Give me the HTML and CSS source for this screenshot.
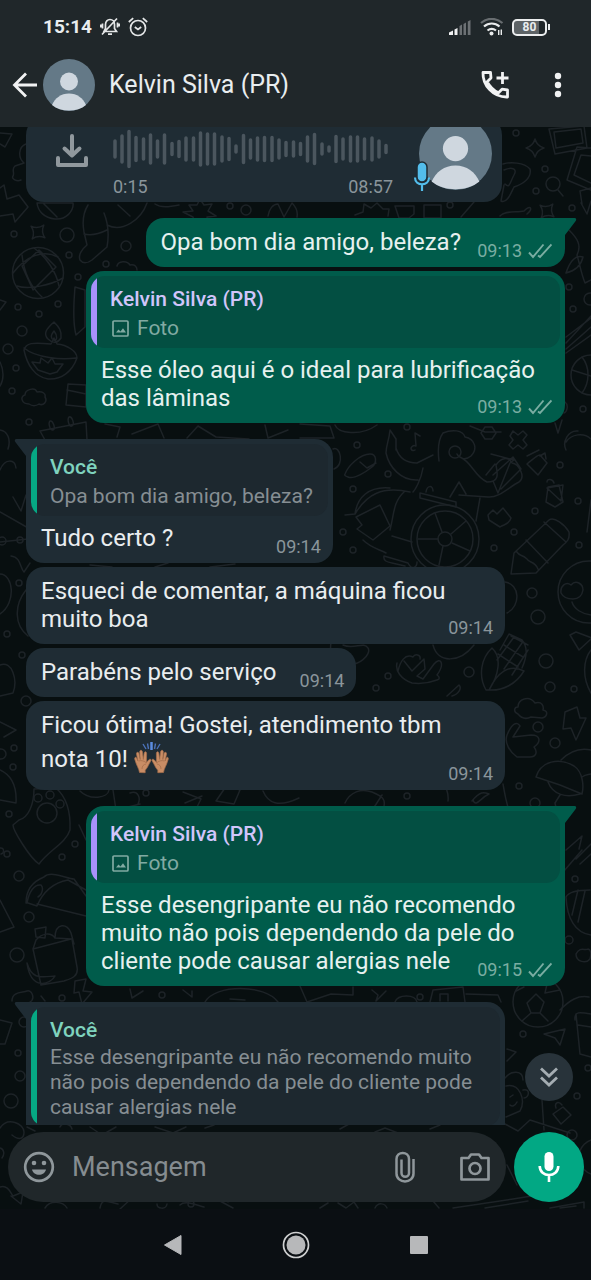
FILE: index.html
```html
<!DOCTYPE html>
<html lang="pt-BR">
<head>
<meta charset="utf-8">
<meta name="viewport" content="width=device-width, initial-scale=1">
<title>Kelvin Silva (PR)</title>
<link rel="stylesheet" href="styles.css">
</head>
<body>
<svg class="defs" aria-hidden="true">
  <symbol id="ticks" viewBox="0 0 24 16"><path d="M1 9.500l4 4.500L15.500 1.500M10 12.500l2 1.500L23.500 1.500" fill="none" stroke="currentColor" stroke-width="1.900"/></symbol>
  <symbol id="photo" viewBox="0 0 17 17"><rect x="1" y="1" width="15" height="15" rx="1" fill="none" stroke="currentColor" stroke-width="1.700"/><path d="M4 12.500l2.500-3 2 2 2.500-3.200 3 4.200z" fill="currentColor"/></symbol>
  <symbol id="person" viewBox="0 0 52 52"><circle cx="26" cy="26" r="26" fill="#647987"/><circle cx="26" cy="22.500" r="9" fill="#cfd7df"/><path d="M9 46c3-7 9-11.500 17-11.500S40 39 43 46c-4.500 3.800-10.500 5.500-17 5.500S13.500 49.800 9 46z" fill="#cfd7df"/></symbol>
  <symbol id="tail" viewBox="0 0 12 18"><path d="M0 0h9.500c2 0 2.200 2 1 3.200L0 17z" fill="currentColor"/></symbol>
  <symbol id="sparkle" viewBox="-12 -12 24 24"><path d="M0-9Q2-2 9 0Q2 2 0 9Q-2 2-9 0Q-2-2 0-9z"/></symbol>
</svg>

<header class="top">
  <div class="status">
    <span class="clock">15:14</span>
    <svg width="20" height="20" viewBox="0 0 20 20" fill="none" stroke="#e4e6e7" stroke-width="1.700"><path d="M4 14.500h12.500l-2-3V7.500C14.500 4.500 12.500 2.500 10 2.500S5.500 4.500 5.500 7.500v4zM8 17.200h4M2.500 6.500v5M.8 7.500v3M17.500 5.500v5M19.200 6.500v3M2 17.500L17 1.500"/></svg>
    <svg width="20" height="20" viewBox="0 0 20 20" fill="none" stroke="#e4e6e7" stroke-width="1.700"><circle cx="10" cy="11" r="7.500"/><path d="M6.800 10l3.200 2.500L13.200 10M.8 5L5.200 1.200M19.200 5L14.800 1.200"/></svg>
    <span class="spacer"></span>
    <svg width="24" height="18" viewBox="0 0 24 18"><path d="M1 17v-2.500l4-2V17zM6.500 17v-5.500l3-1.500v7z" fill="#f0f1f2"/><path d="M11.500 17V8l2.500-1.500V17zM15.500 17V6L18 4.500V17zM19.800 17V3.500L22.500 2v15z" fill="#6c7174"/></svg>
    <svg width="24" height="18" viewBox="0 0 24 18" fill="none" stroke="#e9ebec" stroke-width="2.200"><path d="M1 5C7-.5 16-.5 22.500 5" stroke="#686d70"/><path d="M4 8.500c4.500-4 11-4 15.500 0M7.500 12.500c2.500-2 6-2 8.500 0"/><circle cx="11.500" cy="15.500" r="2" fill="#e9ebec" stroke="none"/><path d="M18.700 17v-5M21.300 11.500v5.500" stroke-width="1.400"/></svg>
    <span class="battery"><span class="battery-body">80</span><span class="battery-tip"></span></span>
  </div>
  <div class="bar">
    <button class="icon-button back" aria-label="Voltar"><svg width="26" height="26" viewBox="0 0 26 26" fill="none" stroke="#f1f2f3" stroke-width="2.800"><path d="M25 13H3M14 1.500L2.500 13 14 24.500"/></svg></button>
    <svg class="avatar" aria-hidden="true"><use href="#person"/></svg>
    <h1 class="name">Kelvin Silva (PR)</h1>
    <button class="icon-button call" aria-label="Ligar"><svg width="28" height="28" viewBox="0 0 28 28" fill="none" stroke="#f1f2f3" stroke-width="2.800"><path d="M2 1.500h7.500l.5 5.500-3.800 3.800C9 16 12 19 17.500 21.800l3.500-3.600 5.500.8v7C12 26.500 1.500 14 2 1.500z" stroke-linejoin="round"/><path d="M21.500 1v12M15.500 7h12"/></svg></button>
    <button class="icon-button" aria-label="Mais opções"><svg width="8" height="26" viewBox="0 0 8 26" fill="#f1f2f3"><circle cx="4" cy="4" r="3.200"/><circle cx="4" cy="13" r="3.200"/><circle cx="4" cy="22" r="3.200"/></svg></button>
  </div>
</header>

<main class="conversation">
  <svg class="wallpaper" viewBox="0 127 591 1082" preserveAspectRatio="xMinYMin slice" aria-hidden="true">
    <g fill="none" stroke="#1d2327" stroke-width="1.500" stroke-linejoin="round" stroke-linecap="round">
      <path d="M0 133l12 1-7 13-5-3M26 144c-8 3-8 14-2 19l-9 3c-4 3 0 7-2 10s4 6 8 4M0 188l4-3 3 14 12-4 9 12-13 15-2-8-13 2M37 203h36c1 8-7 17-18 16s-17-8-18-16zM43 203l14 14"/>
      <path d="M88 205c-5 8-6 16-4 27l3 13c-5 4-9 10-7 15 3 4 8 3 12 0l15-13c2-11 1-24-3-34M84 234c8 2 15 0 23-4M107 225c15 8 34-5 40-22M118 205l12 11M155 204c6 4 14 3 24 1"/>
      <use href="#sparkle" x="-12" y="-12" width="24" height="24" transform="translate(38 232) rotate(40)"/>
      <circle cx="38" cy="273" r="25.500"/><path d="M13 273c13-17 30-24 45-16M17 286c12 4 34-1 46-8M34 248c12 9 22 23 25 38M22 255c2 18 10 33 20 42M22 266l11 24 23-23-17-17z"/>
      <path d="M75 287l10 3v37l-9 8c-4-15-2-34-1-48zM54 322c-8 7-11 12-6 17s10 4 13-1c1-7-2-11-7-16zM54 331c-4 5-3 8 0 9s4-4 0-9zM24 350c2-7 8-8 27-6l3-6 3 6c10 1 20 7 20 14-5 14-16 22-29 21-13-2-21-14-24-29zM24 348c12 10 38 12 52 10M38 370l-6-8 8 1 1-5 7 5 4-5 3 6 8 0-6 8-7 2z"/>
      <path d="M29 404c-8 0-9-8-4-9 0-6 10-8 12-3 6-1 9 2 8 5 3 5-2 9-6 7-3 2-7 2-10 0zM68 384l18 1v22l-20-2zM67 390l19 4M40 431l46-9 1 18H45zM50 421c3-1 6 8 3 9s-5-7-3-9zM69 417c3-1 6 7 3 9s-5-7-3-9zM105 424l15 3-3 10M132 434l26-10 6 14M187 438l11-12 18 11 33 2M265 425l3 13 20-8M300 424l30 2 4 12H300M335 425c3 8 25 12 42 0"/>
      <path d="M183 212l10-1-4-6h8l3-6 4 6 8-1-4 7 8 5-9 1 2 6-10-3-4 3-2-6zM268 216c1-7 5-12 10-12l6 13 8-14c4 4 6 9 5 14M117 266c1-5 10-6 13-1 5-1 7 2 7 5M355 215l8-3 1-8 7 4 6-5 6 6 6 0-1 7M395 206h19v8l-5 4h-10zM424 205h17v13h-17zM461 217l13-15M500 216c5-6 17-3 24-5 7-7 9-2 3 3"/>
      <use href="#sparkle" x="-12" y="-12" width="24" height="24" transform="translate(547 211) rotate(40)"/>
      <use href="#sparkle" x="-12" y="-12" width="24" height="24" transform="translate(535 148)"/>
      <path d="M549 129l35-3 3 22-32 6zM554 132l27-3 2 14-27 5zM591 148l-14-1-10 33 24 10M591 156l-10-1-7 20 17 8M580 191l11-3M580 191l2 13M503 164c7-2 21-2 27 5 2 9-7 15-16 18-3 6-7 17-13 14l3-16M504 170c7-3 14-2 10 5s-4 14-9 9M569 230c8 8 13 15 8 25 3 10 4 18 8 28l6-3M566 273c4-12 10-18 17-16-2 9-9 14-17 16zM581 203l6 11 4-13"/>
      <circle cx="553" cy="184" r="7"/><path d="M558 190l5 6M566 343l25-27M566 337l25-19M566 349l25-22M566 353l25-18"/>
      <circle cx="591" cy="375" r="20"/><path d="M572 370l19 6M582 357c8 10 8 25 0 36M565 402c4 3 2 10-1 11M555 423l3 10 4-13M470 426l15 6h16M415 450c-3 2-6-2-2-4 1-1 2 0 3 0l-1-13 5 3M481 433l4-6h7l4 6-4 6h-7z"/>
      <path d="M510 436l3-5 5 4 5-4 4 4-4 5 4 5-4 4-5-4-5 4-4-4 4-5z"/>
      <path d="M386 453c0-8 3-12 4-23l6 9v11M386 453c3 14 15 28 32 27M396 448c3 10 9 15 21 15l16-8M423 468c-2 12-8 22-10 24M439 461c-1-8-2-20 4-28 9-4 20-3 22 4 10 2 13 12 6 19-6 5-12 2-14-2M460 457c12 5 14 19 27 25 12 0 11-7 9-17 4-6 12-10 16-2 7 1 14 14 7 19-10 5-20 16-31 15l-29-2M450 497l9-15 7 12M495 464l-9 11M491 454l23 6-4 3-12 30-5-12M493 475l20-18 8 12-20 20"/>
      <circle cx="455" cy="452" r="6"/><path d="M345 474c3-8 15-20 25-20 7 0 7 9 2 13s-18 13-24 10c-3-1-4-2-3-3zM360 462l7 6 9-5M333 449c7-4 12 16 1 20"/>
      <circle cx="445" cy="539" r="34"/><circle cx="445" cy="539" r="28"/><circle cx="445" cy="539" r="7"/><path d="M418 539h20M435 513l7 19M466 521l-15 13M470 551l-18-8M439 565l4-19M420 493l36 9v5l-36-9zM426 492c1-7 7-7 7-1M345 515l10-1c2-16 13-28 35-26M355 514c12-20 27-28 55-22M362 525l-6-8 24-12 10 21-17 14-16-11zM390 530c4-15 3-28 14-38M392 536l20 6M363 540c8 8 16 9 23 13M384 556l24 7c4 8 9 4 9-1M384 556c-1 5 3 6 8 7l13 3M480 498l-4 23"/>
      <path d="M511 574l3-21 35-33c5-4 16 5 20 12 1 7-2 10-6 13l-27 28zM516 551c5 7 5 2 11 8 2 4 8 2 11 10M544 522l22 20M526 540l22 23M527 456l12-6M527 464c5-4 11-10 13-9l7 8-9 12zM540 456l5-3 1 6M547 488l16-3-2 16zM548 487l11-2 4 17-8 5-9-5zM547 482c0-4 6-3 7 1M488 515l5-5 4 4 6-6 8 10c-2 7-7 6-11 9l-11-7zM591 500l-4 32M566 442c5-8 18-10 25-3M566 450c-4-8 2-20 12-19"/>
      <circle cx="589" cy="592" r="31"/><path d="M561 593c-1-7 5-12 10-8 5-6 12-1 12 5-1 6-5 9-10 9-6 0-10-2-12-6zM572 602c2 7 10 12 19 13M505 582c15 2 16 24 2 31M570 635l6-3 16 6-13 12zM591 650c-8 10-9 28 0 43"/>
      <path d="M486 690c-8-14-5-32 6-42 10 9 7 27-3 42zM489 690c8-17 20-27 35-19-8 13-21 20-35 19zM500 650l9-16 13 6c6 7 5 17 0 28M498 654l20 13M504 645l19 12M511 636l17 9M514 637l-17 23M522 643l-18 26M528 650l-16 25M398 671c2-9 7-18 15-14 2-4 8-2 7 2M404 661l8 10 12-12 1 10-8 7 6 3 11-15c7-8 11 0 3 11 3 2 3 4 0 5-8 3-18 4-25 3-11-4-17-12-15-20M343 645c11 5 21-4 25 3 4 6-10 20-22 15-12-3-17-10-15-20M433 645c5 19 27 18 41 0M447 696l12-11c3 3 0 9-7 11"/>
      <path d="M518 714c-5-2-4-7 0-7 0-8 11-12 17-4 7-2 9 3 8 7 6 1 4 7-1 8l-11-1c-4 2-9 2-13-3zM565 712l12-5 3 11h6l-10 22-5-12-8 1zM507 735c5-12 10-14 13-9l-7 11 18-2c10 0 10 7 3 12 4 5 2 10-4 10l-13 0c-7-5-13-14-10-22M536 777c5-16 23-20 38-11 9 6 10 20 8 28l-22-9-24-8zM548 782c5 13 18 16 32 12M561 760c10-10 21-12 30-10M582 777c4-3 6-2 9-3M448 801c1-8-2-12-2-14M560 795l-5 8 3 14M566 850l16-14-3 13M582 850l-18 21M576 859l15-15M580 864l11-10M590 890c-17 0-22 3-24 7 1 21 9 36 25 38M578 890l-6 25M585 891l-7 31M576 954c4-8 9-3 12-5 4 1 3 6 2 10-4 5-14 3-14-5M503 784c2 13 5 24 7 31M345 803c5-11 16-15 27-11 10 4 15 7 11 18M472 801c8-10 12-9 17-7-9 4-13 14-16 6M382 795l-9 14"/>
      <path d="M19 820c9-2 15-15 15-31l22-1c8 7 15 18 14 42-4 13-22 21-31 34-10-7-26-34-26-39zM79 825l7 15"/>
      <circle cx="47" cy="813" r="10"/><circle cx="38" cy="798" r="4"/><circle cx="50" cy="795" r="4"/><circle cx="60" cy="804" r="4"/>
      <path d="M0 770c11 5 17 16 16 33L0 800M0 722l16 8-12 7M0 665c12-5 18 15 13 28l-13 3M80 791c10 10 28 7 29-1M113 790l3 20 24-6M130 793c8-3 11 5 8 11M183 792l18 7-4 8M185 803l17-7M216 801l18 3 6-14-13-5zM263 791c5 12 15 17 36 7"/>
      <path d="M0 542l28-3M0 512l30 17M11 556c10 1 9 12 13 16l6-9M0 470c5-12 15-11 16-2M26 495l-5 16-8-14M0 574c13 0 17 28 0 40M26 590c-12 15-12 35 2 46M90 565l22 2M155 567l13-4M210 567l25-3"/>
      <path d="M26 903c0-10 3-20 18-26 7-7 23 2 30 2l12 17M28 903l9 3c5-12 15-23 31-26l18 10M37 904l49 12M27 903c2-11 7-19 14-18 3 3 1 10-3 12M35 929l11-2-1 11-9-1zM33 949l3-9c6-7 15-8 19-2l17 1 5 28c2 10-7 12-13 14l-23 4-8-36 38-10M55 938c0-16 13-15 16-5l3 11M27 963c5 17 14 14 28 13-4 8-24 16-28-13zM0 900l14 27-14 5M75 981l11-2-3 12 9 1-10 12-3-12-5 1zM12 1001c0-10 11-8 15-10s9 7 3 11l-4 12M41 996l4 5M130 989l2 9 11-7M183 990l9 7v-6M205 1002c10-18 60-18 73 0M230 999l15 1M0 1020l12 3-7 21H0M300 986l7 16 24-8 22 1v-8M372 990l6 5-2 6 10-10M395 1002c3-8 20-8 22 0M430 1002l3-12 30-3 2 15M440 1001v-7h8v7M466 994l32 1 3 7"/>
      <circle cx="538" cy="1002" r="25"/><path d="M527 1003l9-9 8 8-4 11h-9zM516 991l8-4M560 990l-15 3 2-9M522 1021l9-8M548 1021l-8-8M560 1010c10-10 18-15 29-13M575 1020c-1-9 5-8 16-6M576 1014l4 40 11 3M578 1025l13 2M544 1034l21-5-5 16-5-7zM507 1049l9 3-9 9M505 1078c6-8 18-8 18 2M506 1086c14-3 20 14 14 25l-14 6M510 1097l3-2M510 1105c2 2 5 1 7-3M523 1090c8-2 6 8 1 8M542 1100l2 30M505 1124l13 7 12-11 40 13M507 1165l10 20M553 1114l10-7 8 8-10 9zM556 1108c-2-6 3-7 6-3"/>
      <circle cx="597" cy="1157" r="18"/><path d="M0 1128c8-12 24-4 24 4s-6 8-12 3M0 1148c4 1 5 6 2 10M0 1187c8-3 11 7 13 9l10-4-2 12-10-8M27 1127l8 4M60 1127c2-5 11-3 12 2M90 1127l12 8 14-8M155 1127l18 6 13-6M205 1128l9-3M45 1208c5-8 18-7 22 0M100 1208c2-11 7-6 18-4M120 1209l12-11M157 1204c0 5 9 6 10 0M180 1205c5-5 16 0 24 2M228 1202l-2-5-6 4 13 7M340 1129l9-5M375 1132l10-4 13 5M430 1129l10-4M453 1208l60-9 25-4M485 1208l43-7M550 1208l34-6v6M560 1208l16-2M320 1208l8-5M338 1203l8 5 8-6 4 6M375 1208c3-6 10-5 12 0M433 1201l6 7"/>
      <path d="M455 822l8-4M0 848c4-1 5 5 1 6M0 300l6 2-6 8M0 362c4 8 4 18 0 24M0 430c8 1 11 10 8 19"/>
      <circle cx="14" cy="234" r="3"/><circle cx="67" cy="235" r="7"/><circle cx="126" cy="246" r="5"/><circle cx="69" cy="255" r="3"/><circle cx="106" cy="264" r="3"/><circle cx="78" cy="277" r="3"/><circle cx="18" cy="307" r="3"/><circle cx="58" cy="304" r="3"/><circle cx="39" cy="314" r="3"/><circle cx="22" cy="331" r="5"/><circle cx="8" cy="349" r="5"/><circle cx="16" cy="368" r="3"/><circle cx="12" cy="391" r="3"/><circle cx="29" cy="422" r="3"/><circle cx="230" cy="206" r="3"/><circle cx="246" cy="210" r="5"/><circle cx="450" cy="205" r="3"/><circle cx="572" cy="208" r="3"/><circle cx="569" cy="287" r="3"/><circle cx="590" cy="299" r="6"/><circle cx="573" cy="309" r="3"/><circle cx="583" cy="409" r="3"/><circle cx="407" cy="427" r="3"/><circle cx="357" cy="445" r="3"/><circle cx="516" cy="133" r="3"/><circle cx="545" cy="169" r="3"/><circle cx="536" cy="191" r="3"/>
      <circle cx="388" cy="474" r="3"/><circle cx="353" cy="489" r="3"/><circle cx="343" cy="532" r="3"/><circle cx="353" cy="550" r="3"/><circle cx="560" cy="465" r="3"/><circle cx="578" cy="501" r="3"/><circle cx="535" cy="511" r="3"/><circle cx="514" cy="532" r="3"/><circle cx="494" cy="548" r="3"/><circle cx="579" cy="545" r="3"/><circle cx="532" cy="593" r="5"/><circle cx="538" cy="617" r="7"/><circle cx="546" cy="661" r="7"/><circle cx="550" cy="687" r="5"/><circle cx="574" cy="689" r="3"/><circle cx="469" cy="672" r="5"/><circle cx="388" cy="676" r="3"/><circle cx="376" cy="688" r="3"/><circle cx="538" cy="727" r="5"/><circle cx="555" cy="743" r="5"/><circle cx="519" cy="786" r="3"/><circle cx="535" cy="803" r="5"/><circle cx="407" cy="796" r="3"/><circle cx="575" cy="879" r="3"/><circle cx="569" cy="940" r="4"/><circle cx="420" cy="997" r="3"/>
      <circle cx="20" cy="540" r="3"/><circle cx="2" cy="541" r="4"/><circle cx="19" cy="583" r="3"/><circle cx="7" cy="634" r="3"/><circle cx="22" cy="655" r="3"/><circle cx="26" cy="701" r="5"/><circle cx="14" cy="748" r="3"/><circle cx="1" cy="754" r="5"/><circle cx="13" cy="767" r="3"/><circle cx="9" cy="814" r="3"/><circle cx="75" cy="844" r="3"/><circle cx="7" cy="854" r="3"/><circle cx="62" cy="857" r="3"/><circle cx="19" cy="876" r="5"/><circle cx="29" cy="917" r="5"/><circle cx="17" cy="955" r="7"/><circle cx="62" cy="998" r="3"/><circle cx="162" cy="995" r="3"/><circle cx="24" cy="1022" r="5"/><circle cx="18" cy="1053" r="3"/><circle cx="20" cy="1076" r="5"/><circle cx="11" cy="1101" r="7"/><circle cx="523" cy="1034" r="3"/><circle cx="588" cy="1068" r="3"/><circle cx="577" cy="1096" r="3"/><circle cx="572" cy="1135" r="5"/><circle cx="146" cy="793" r="3"/><circle cx="191" cy="1204" r="3"/>
    </g>
  </svg>

  <div class="chat">
    <article class="bubble in audio">
      <button class="icon-button download" aria-label="Baixar"><svg width="34" height="34" viewBox="0 0 34 34" fill="none" stroke="#90989d" stroke-width="4" stroke-linecap="round" stroke-linejoin="round"><path d="M17 3v19M9.500 15.500L17 22.500l7.500-7M3 25v7h28v-7"/></svg></button>
      <div class="track">
        <svg width="281" height="40" viewBox="0 0 281 40" stroke="#4b565e" stroke-width="3.500" stroke-linecap="round" aria-hidden="true"><path d="M3 12v16M10 7v26M17 2.500v35M24 8.500v23M31.500 10v20M38.500 6v28M45.500 12v16M52.500 6v28M60 14.500v11M67 12.500v15M74 9v22M81.500 9v22M88.500 4v32M95.500 5v30M102.500 5v30M110 8v24M117 9.500v21M124 17v6M131.500 6.500v27M138.500 11v18M145.500 9v22M152.500 8.500v23M160 8.500v23M167 11v18M174 13.500v13M181.500 13v14M188.500 14.500v11M195.500 8v24M202.500 5.500v29M210 15v10M217 18v4M224 7.500v25M231 10v20M238.500 8v24M245.500 8v24M252.500 10v20M260 9v22M267 12v16M274 16.500v7"/></svg>
        <div class="track-times"><span>0:15</span><time>08:57</time></div>
      </div>
      <div class="sender">
        <svg class="sender-photo" aria-hidden="true"><use href="#person"/></svg>
        <svg class="sender-mic" viewBox="0 0 18 32" aria-hidden="true"><rect x="4" y="1" width="10" height="20" rx="5" fill="#53bdeb" stroke="#1f2c34" stroke-width="1.500"/><path d="M2 16.500c0 9 14 9 14 0M9 23.500V30" fill="none" stroke="#53bdeb" stroke-width="2.200"/></svg>
      </div>
    </article>

    <article class="bubble out first">
      <svg class="tail"><use href="#tail"/></svg>
      <div class="body"><p>Opa bom dia amigo, beleza?</p><span class="meta"><time>09:13</time><svg class="ticks"><use href="#ticks"/></svg></span></div>
    </article>

    <article class="bubble out">
      <blockquote class="quote"><strong>Kelvin Silva (PR)</strong><span class="media"><svg class="photo"><use href="#photo"/></svg>Foto</span></blockquote>
      <div class="body"><p>Esse óleo aqui é o ideal para lubrificação das lâminas</p><span class="meta"><time>09:13</time><svg class="ticks"><use href="#ticks"/></svg></span></div>
    </article>

    <article class="bubble in first">
      <svg class="tail"><use href="#tail"/></svg>
      <blockquote class="quote"><strong>Você</strong><span>Opa bom dia amigo, beleza?</span></blockquote>
      <div class="body"><p>Tudo certo ?</p><span class="meta"><time>09:14</time></span></div>
    </article>

    <article class="bubble in">
      <div class="body"><p>Esqueci de comentar, a máquina ficou muito boa</p><span class="meta"><time>09:14</time></span></div>
    </article>

    <article class="bubble in">
      <div class="body"><p>Parabéns pelo serviço</p><span class="meta"><time>09:14</time></span></div>
    </article>

    <article class="bubble in">
      <div class="body"><p>Ficou ótima! Gostei, atendimento tbm nota 10! <svg class="emoji" viewBox="0 0 35 33" role="img" aria-label="Mãos levantadas"><path d="M17.500 1v8" stroke="#5c8de0" stroke-width="2.500"/><path d="M13.500 2.500l1 5.500M21.500 2.500l-1 5.500M9 3l3 5M26 3l-3 5" stroke="#4b72b8" stroke-width="1.400"/><g id="hand"><path d="M5.500 31.500c-.5-4-3.500-8-4.800-13.500-.3-2 1.600-2.300 2.200-.5l1 2.500-1.400-7c-.3-2 2-2.300 2.500-.4l1.200 5.900-.5-7.700c0-2 2.400-2 2.700 0l.9 7.600.9-6.500c.4-1.800 2.500-1.400 2.400.5l-.1 9.100c1.500-1.800 3-4 4.300-3 1 1-1.500 3.500-2.500 6-1 2.300-2.200 3.700-3.100 4.700v2.500z" fill="#c98d65" stroke="#a66f4b" stroke-width=".7"/><path d="M4.500 20c3-1 6 0 8 2M8 28c0-3 1.500-4.500 4-5" fill="none" stroke="#a66f4b" stroke-width=".8"/></g><use href="#hand" transform="translate(35 0) scale(-1 1)"/></svg></p><span class="meta"><time>09:14</time></span></div>
    </article>

    <article class="bubble out first">
      <svg class="tail"><use href="#tail"/></svg>
      <blockquote class="quote"><strong>Kelvin Silva (PR)</strong><span class="media"><svg class="photo"><use href="#photo"/></svg>Foto</span></blockquote>
      <div class="body"><p>Esse desengripante eu não recomendo muito não pois dependendo da pele do cliente pode causar alergias nele</p><span class="meta"><time>09:15</time><svg class="ticks"><use href="#ticks"/></svg></span></div>
    </article>

    <article class="bubble in first partial">
      <svg class="tail"><use href="#tail"/></svg>
      <blockquote class="quote"><strong>Você</strong><span>Esse desengripante eu não recomendo muito não pois dependendo da pele do cliente pode causar alergias nele</span></blockquote>
    </article>

    <button class="jump" aria-label="Ir para o fim"><svg width="20" height="22" viewBox="0 0 20 22" fill="none" stroke="#a5adb2" stroke-width="2.800"><path d="M2 2.500l8 7.500 8-7.500M2 11.500l8 7.500 8-7.500"/></svg></button>
  </div>

  <form class="composer">
    <div class="field">
      <button type="button" class="icon-button" aria-label="Emoji"><svg width="32" height="32" viewBox="0 0 32 32"><circle cx="16" cy="16" r="13.800" fill="none" stroke="#8f979b" stroke-width="2.700"/><circle cx="11" cy="12" r="2.300" fill="#8f979b"/><circle cx="21" cy="12" r="2.300" fill="#8f979b"/><path d="M9 18.500h14c-1.500 7-12.500 7-14 0z" fill="#8f979b"/></svg></button>
      <input class="text" type="text" placeholder="Mensagem" aria-label="Mensagem">
      <button type="button" class="icon-button clip" aria-label="Anexar"><svg width="20" height="32" viewBox="0 0 20 32" fill="none" stroke="#8f979b" stroke-width="2.500"><path d="M18.500 8v14.500c0 10.500-17 10.500-17 0V8c0-8 12.500-8 12.500 0v14c0 5-7.500 5-7.500 0V8.500"/></svg></button>
      <button type="button" class="icon-button" aria-label="Câmera"><svg width="32" height="30" viewBox="0 0 32 30" fill="none" stroke="#8f979b" stroke-width="2.700" stroke-linejoin="round"><path d="M2.500 6h7l2.500-3.500h8L22.500 6h7v21.500h-27z"/><circle cx="16" cy="16.500" r="5.500"/></svg></button>
    </div>
    <button type="button" class="record" aria-label="Gravar áudio"><svg width="22" height="30" viewBox="0 0 22 30"><rect x="6.500" y="0" width="9" height="19" rx="4.500" fill="#fff"/><path d="M1.700 14c0 12 18.600 12 18.600 0M11 23v7" fill="none" stroke="#fff" stroke-width="2.600"/></svg></button>
  </form>
</main>

<nav class="system" aria-label="Sistema">
  <button class="icon-button" aria-label="Voltar"><svg width="20" height="22" viewBox="0 0 20 22"><path d="M18 1.500v19L1.500 11z" fill="#b7b8ba" stroke="#b7b8ba" stroke-width="1" stroke-linejoin="round"/></svg></button>
  <button class="icon-button" aria-label="Início"><svg width="28" height="28" viewBox="0 0 28 28"><circle cx="14" cy="14" r="12.500" fill="none" stroke="#cfd0d1" stroke-width="1.700"/><circle cx="14" cy="14" r="9.500" fill="#b7b8ba"/></svg></button>
  <button class="icon-button" aria-label="Recentes"><svg width="18" height="18" viewBox="0 0 18 18"><rect width="18" height="18" rx="1" fill="#b7b8ba"/></svg></button>
</nav>
</body>
</html>
```
FILE: styles.css
```css
* { box-sizing: border-box; }

body {
  margin: 0;
  height: 100vh;
  display: flex;
  flex-direction: column;
  overflow: hidden;
  background: #080f10;
  color: #e9edef;
  font-family: Roboto, "Liberation Sans", sans-serif;
  font-size: 24px;
  line-height: 28px;
}

.defs { position: absolute; width: 0; height: 0; }

svg { display: block; flex: none; }

.icon-button {
  display: flex;
  align-items: center;
  justify-content: center;
  padding: 0;
  border: 0;
  background: none;
}

/* Header */
.top { flex: none; background: #20272a; }

.status {
  display: flex;
  align-items: center;
  gap: 8px;
  height: 54px;
  padding: 0 41px 0 43px;
}

.clock { font-size: 19px; font-weight: 700; }
.spacer { flex: 1; }
.battery { display: flex; align-items: center; gap: 1px; }

.battery-body {
  width: 35px;
  height: 17px;
  border: 2px solid #eceeef;
  border-radius: 5px;
  background: linear-gradient(90deg, #5d6366 80%, #20272a 80%);
  font-size: 12px;
  font-weight: 700;
  line-height: 13px;
  text-align: center;
}

.battery-tip { width: 2px; height: 6px; background: #eceeef; }

.bar {
  display: flex;
  align-items: center;
  height: 73px;
  padding: 0 29px 12px 12px;
}

.avatar { width: 52px; height: 52px; margin: 0 14px 0 5px; }
.name { flex: 1; margin: 0; font-size: 25px; font-weight: 400; }
.call { margin-right: 45px; }

/* Conversation */
.conversation {
  position: relative;
  flex: 1;
  min-height: 0;
  display: flex;
  flex-direction: column;
}

.wallpaper { position: absolute; inset: 0; width: 100%; height: 100%; }

.chat {
  position: relative;
  flex: 1;
  min-height: 0;
  overflow: hidden;
  display: flex;
  flex-direction: column;
  gap: 4px;
  padding: 0 26px;
}

.bubble {
  position: relative;
  flex: none;
  max-width: calc(100% - 60px);
  border-radius: 18px;
}

.in { align-self: flex-start; background: #1f2c34; color: #e9edef; }
.out { align-self: flex-end; background: #005c4b; color: #e6f1ef; }
.first { margin-top: 12px; }
.in.first { border-top-left-radius: 0; }
.out.first { border-top-right-radius: 0; }

.tail { position: absolute; top: 0; width: 12px; height: 18px; }
.out .tail { left: 100%; color: #005c4b; }
.in .tail { right: 100%; color: #1f2c34; transform: scaleX(-1); }

.body { display: grid; padding: 10px 12px 11px 15px; }
.body p { grid-area: 1 / 1; margin: 0; }
.body p::after { content: ""; display: inline-block; width: 68px; }
.out .body p::after { width: 92px; }
.quote + .body { padding-top: 8px; }

.meta {
  grid-area: 1 / 1;
  place-self: end;
  display: flex;
  align-items: center;
  gap: 6px;
  margin-bottom: -5px;
  color: #8a959b;
  font-size: 18px;
  line-height: 20px;
}

.out .meta { padding-right: 1px; color: #7aada2; }
.ticks { width: 24px; height: 16px; }

.emoji { display: inline-block; width: 35px; height: 33px; margin: 2px 0 5px; vertical-align: -12px; }

.quote {
  position: relative;
  display: flex;
  flex-direction: column;
  gap: 1px;
  margin: 0 5px;
  padding: 9px 15px 6px 19px;
  border-radius: 14px;
  overflow: hidden;
  font-size: 21px;
}

.bubble:has(.quote) { padding-top: 5px; }

.quote::before {
  content: "";
  position: absolute;
  inset: 0 auto 0 0;
  width: 6px;
  background: #06a884;
}

.quote strong { font-weight: 500; line-height: 28px; }
.in .quote { background: #1d282f; color: #868e93; }
.in .quote strong { color: #7fd3be; }
.out .quote { background: #034f42; color: #81aaa2; }
.out .quote strong { color: #d1c5fb; }
.out .quote::before { background: #a791fb; }

.media { display: flex; align-items: center; gap: 8px; }
.photo { width: 17px; height: 17px; margin-left: 2px; }
.partial { padding-bottom: 60px; }
.partial .quote { line-height: 25px; }

/* Voice message */
.audio {
  display: flex;
  width: 100%;
  max-width: 476px;
  margin-top: -10px;
  padding: 12px 10px 5px 29px;
}

.download { align-self: flex-start; margin-top: 4px; }
.track { margin-left: 23px; }
.track-times {
  display: flex;
  justify-content: space-between;
  padding: 8px 0 0 1px;
  color: #8a959b;
  font-size: 18px;
  line-height: 20px;
}

.sender { position: relative; margin: -12px 0 0 auto; }
.sender-photo { width: 73px; height: 73px; }
.sender-mic { position: absolute; left: -6px; bottom: 4px; width: 18px; height: 32px; }

.jump {
  position: absolute;
  right: 18px;
  bottom: 24px;
  display: flex;
  align-items: center;
  justify-content: center;
  width: 48px;
  height: 48px;
  padding: 0;
  border: 0;
  border-radius: 50%;
  background: #28333a;
}

/* Composer */
.composer {
  position: relative;
  flex: none;
  display: flex;
  gap: 8px;
  padding: 7px 7px 7px 8px;
}

.field {
  flex: 1;
  min-width: 0;
  display: flex;
  align-items: center;
  height: 70px;
  padding: 0 15px;
  border-radius: 35px;
  background: #20272a;
}

.text {
  flex: 1;
  min-width: 0;
  margin-left: 17px;
  padding: 0;
  border: 0;
  outline: 0;
  background: none;
  color: #e9edef;
  font: inherit;
  font-size: 27px;
  line-height: 32px;
}

.text::placeholder { color: #858c90; opacity: 1; }
.clip { margin-right: 44px; }

.record {
  flex: none;
  display: flex;
  align-items: center;
  justify-content: center;
  width: 70px;
  height: 70px;
  padding: 0;
  border: 0;
  border-radius: 50%;
  background: #02a884;
}

/* System navigation */
.system {
  flex: none;
  display: flex;
  align-items: center;
  justify-content: center;
  gap: 75px;
  height: 71px;
  background: #0b0f13;
}

.system .icon-button { width: 48px; height: 48px; }
```
